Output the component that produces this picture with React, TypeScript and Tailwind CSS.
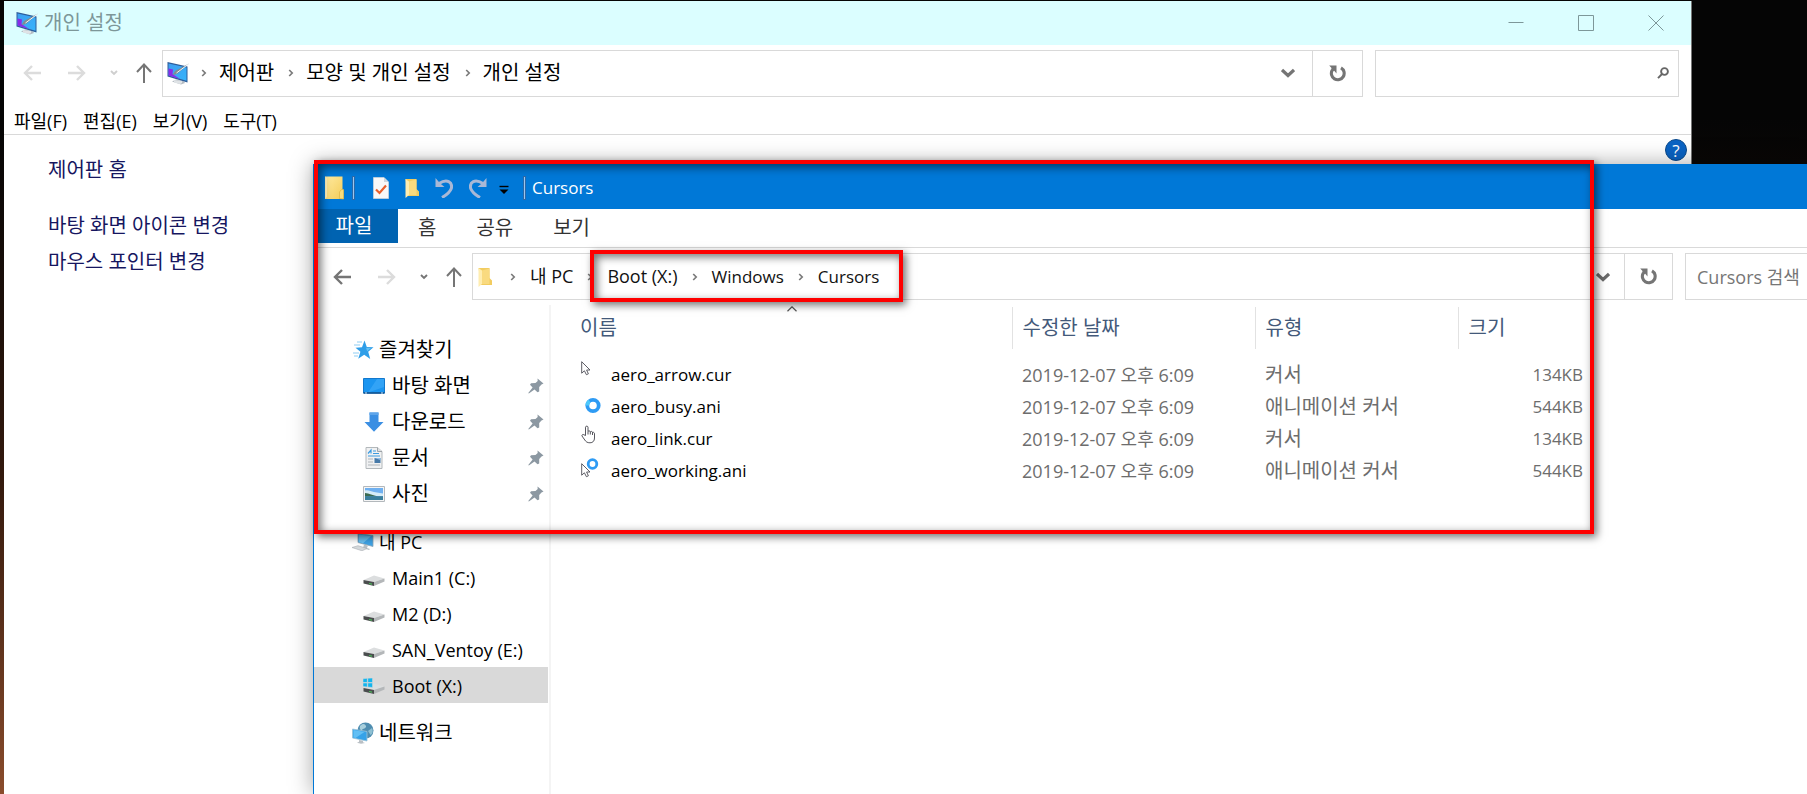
import React from "react";

type IconProps = { className?: string };

function DisplayIcon({ className = "" }: IconProps) {
  return (
    <svg viewBox="0 0 22 24" className={`h-6 w-[22px] shrink-0 ${className}`} aria-hidden="true">
      <defs>
        <linearGradient id="dispA" x1="0" y1="0" x2="1" y2="1">
          <stop offset="0" stopColor="#3f9df0" />
          <stop offset="1" stopColor="#35b4fb" />
        </linearGradient>
      </defs>
      <path d="M5 20.5l9 3 4-1.5-1-1.5-8-2z" fill="#b4bbc2" />
      <path d="M7 19v2.500l6 1.500 2-1v-2z" fill="#dfe3e6" />
      <path d="M0.500 1L20.500 5.500V21.500L0.500 15.500z" fill="#2d5c99" />
      <path d="M1.500 2.500L19.500 6.500V19.800L1.500 14.500z" fill="url(#dispA)" />
      <path d="M1.500 7.500L6 8.500 5.500 13 13 18 1.500 14.500z" fill="#8a2be8" />
      <path d="M22 2.500L10 13 5.500 14 8 10z" fill="#7f8b92" />
      <path d="M21.500 3L9.500 12" stroke="#eef2f4" strokeWidth="1" />
    </svg>
  );
}

function ArrowLeft({ className = "" }: IconProps) {
  return (
    <svg viewBox="0 0 18 18" className={`h-[18px] w-[18px] shrink-0 ${className}`} fill="none" stroke="currentColor" strokeWidth="2.4" aria-hidden="true">
      <path d="M18 9H2M9 2L2 9l7 7" />
    </svg>
  );
}

function ArrowRight({ className = "" }: IconProps) {
  return (
    <svg viewBox="0 0 18 18" className={`h-[18px] w-[18px] shrink-0 ${className}`} fill="none" stroke="currentColor" strokeWidth="2.4" aria-hidden="true">
      <path d="M0 9h16M9 2l7 7-7 7" />
    </svg>
  );
}

function ArrowUp({ className = "" }: IconProps) {
  return (
    <svg viewBox="0 0 16 20" className={`h-5 w-4 shrink-0 ${className}`} fill="none" stroke="currentColor" strokeWidth="2" aria-hidden="true">
      <path d="M8 20V2M1 9l7-7.500L15 9" />
    </svg>
  );
}

function SmallDown({ className = "" }: IconProps) {
  return (
    <svg viewBox="0 0 8 6" className={`h-1.5 w-2 shrink-0 ${className}`} fill="none" stroke="currentColor" strokeWidth="1.9" aria-hidden="true">
      <path d="M1 1l3 3 3-3" />
    </svg>
  );
}

function BigDown({ className = "" }: IconProps) {
  return (
    <svg viewBox="0 0 14 10" className={`h-2.5 w-3.5 shrink-0 ${className}`} fill="none" stroke="currentColor" strokeWidth="3.2" aria-hidden="true">
      <path d="M1 2l6 5.500L13 2" />
    </svg>
  );
}

function Crumb({ className = "" }: IconProps) {
  return (
    <svg viewBox="0 0 6 8" className={`h-2 w-1.5 shrink-0 text-[#7a7a7a] ${className}`} fill="none" stroke="currentColor" strokeWidth="1.7" aria-hidden="true">
      <path d="M1.200 1l3 3-3 3" />
    </svg>
  );
}

function Refresh() {
  return (
    <svg viewBox="0 0 17 17" className="h-[17px] w-[17px] text-[#757575]" fill="none" aria-hidden="true">
      <path d="M12 2.800A6.400 6.400 0 1 1 3.300 5" stroke="currentColor" strokeWidth="3.100" />
      <path d="M0.200 0.500H7.500V8.500L5.200 5.800 1.500 7.200 2.500 3z" fill="currentColor" />
    </svg>
  );
}

function Magnifier() {
  return (
    <svg viewBox="0 0 12 12" className="h-3 w-3 text-[#666]" fill="none" stroke="currentColor" strokeWidth="1.900" aria-hidden="true">
      <circle cx="7.500" cy="4.500" r="3.400" />
      <path d="M5 7L1 11.200" />
    </svg>
  );
}

function Folder({ className = "h-6 w-5" }: IconProps) {
  return (
    <svg viewBox="0 0 20 24" className={`shrink-0 ${className}`} preserveAspectRatio="none" aria-hidden="true">
      <defs>
        <linearGradient id="foldA" x1="0" y1="0" x2="1" y2="1">
          <stop offset="0" stopColor="#ffeaa0" />
          <stop offset="1" stopColor="#f3cc58" />
        </linearGradient>
      </defs>
      <path d="M1 0.500H18.500V14H19.500V23H1z" fill="url(#foldA)" />
      <path d="M15.500 22.500V16l2-2.500H19.500V23z" fill="#f8dc7c" stroke="#dcb445" strokeWidth="0.7" />
      <path d="M1 0.500V23L3 21V2z" fill="#fff0b8" />
    </svg>
  );
}

function FolderOpen({ className = "" }: IconProps) {
  return (
    <svg viewBox="0 0 14 20" className={`h-5 w-3.5 shrink-0 ${className}`} aria-hidden="true">
      <path d="M0.500 1H11.500V11L14 13.500V18H3z" fill="#f2cc60" />
      <path d="M0.500 1L4 3.500V17L0.500 20z" fill="#ffedb0" />
      <path d="M4 3.500L4 17 11.500 17V1.500z" fill="#f9da7f" />
    </svg>
  );
}

function CheckDoc() {
  return (
    <svg viewBox="0 0 16 22" className="h-[22px] w-4" aria-hidden="true">
      <path d="M0.500 0.500H11L15.500 5V21.500H0.500z" fill="#f8f8f8" stroke="#c9d3dd" strokeWidth="0.8" />
      <path d="M11 0.500V5h4.500" fill="#cfd6dc" />
      <path d="M3 12.500l3.500 3.500L13 8.500" fill="none" stroke="#e8602c" strokeWidth="2.200" />
    </svg>
  );
}

function Undo({ className = "" }: IconProps) {
  return (
    <svg viewBox="0 0 18 20" className={`h-5 w-[18px] ${className}`} fill="none" aria-hidden="true">
      <path d="M4 5.500C12 0.500 17.800 4 16.300 10.500 15 14 11.500 17 7 19.500" stroke="#a9b8d6" strokeWidth="3" />
      <path d="M0.500 0V9H9.500L6.500 6.500 3.500 3.500z" fill="#a9b8d6" />
    </svg>
  );
}

function StarIcon() {
  return (
    <svg viewBox="0 0 22 20" className="h-5 w-[22px]" aria-hidden="true">
      <path d="M12.500 0.500l2.300 6.500 6.700 0.300-5.300 4.400 2 7.300-6-4.200-6 4 2.200-7L3.500 7.800l6.500-0.500z" fill="#2f9ee8" />
      <path d="M12.500 2.500l1.600 5.200 5 0.400-4 3.200z" fill="#64c2f6" />
      <path d="M5 2h5M2 5h6M1 13h6M2 16h4" stroke="#8fcdf3" strokeWidth="1" />
    </svg>
  );
}

function DesktopIcon() {
  return (
    <svg viewBox="0 0 22 16" className="h-4 w-[22px]" aria-hidden="true">
      <path d="M0.500 0.500h21v14.500h-21z" fill="#1b95f0" stroke="#1278cd" />
      <path d="M14 1h7v8L5 14.500z" fill="#43aefa" opacity="0.6" />
      <path d="M0.500 15h21" stroke="#12508c" strokeWidth="1.500" />
      <path d="M2 15h2M18 15h2" stroke="#cfe8fa" strokeWidth="1" />
    </svg>
  );
}

function DownloadIcon() {
  return (
    <svg viewBox="0 0 20 20" className="h-5 w-5" aria-hidden="true">
      <path d="M5.500 0.500h9V10h5L10 19.800 0.500 10h5z" fill="#3b8fe3" />
      <path d="M5.500 0.500h9V3h-9z" fill="#5ea5ea" />
    </svg>
  );
}

function DocumentIcon() {
  return (
    <svg viewBox="0 0 18 22" className="h-[22px] w-[18px]" aria-hidden="true">
      <path d="M1 0.500h11.500l4.500 4V21.500H1z" fill="#f0f1f2" stroke="#b3b8bb" />
      <path d="M12.500 0.500v4H17" fill="#dde1e4" stroke="#8e9499" strokeWidth="0.8" />
      <path d="M3 6.500L6 3v3.500M8 4h3M8 6.500h6M3 9h12" stroke="#3a9be0" strokeWidth="1.200" fill="none" />
      <path d="M3 12h5M3 15h5M3 18h12" stroke="#b0b6ba" strokeWidth="1.100" />
      <path d="M9.500 11h6v5h-6z" fill="#4679a8" />
      <path d="M9.500 11h6v2z" fill="#8fc0ea" />
    </svg>
  );
}

function PictureIcon() {
  return (
    <svg viewBox="0 0 22 16" className="h-4 w-[22px]" aria-hidden="true">
      <path d="M0.500 0.500h21v15h-21z" fill="#f5f5f5" stroke="#b3b8bc" />
      <path d="M2 2h18v12H2z" fill="#6fb0f0" />
      <path d="M2 4.500c3-1 6 1 9 1.500s6 1 9 1.500v2.500H2z" fill="#d5ecf8" />
      <path d="M2 7c4 0 8 2.500 13 3.500H2z" fill="#3b6b50" />
      <path d="M2 10.200h18V14H2z" fill="#3a7f9c" />
    </svg>
  );
}

function ComputerIcon() {
  return (
    <svg viewBox="0 0 24 18" className="h-[18px] w-6" aria-hidden="true">
      <path d="M7 0.500L22 2.500V13.500L7 9.500z" fill="#3ea3e6" stroke="#8ba5b5" strokeWidth="0.8" />
      <path d="M8 1.500l12 1.700-8 7L8 9z" fill="#6cc2f3" />
      <path d="M13 11.500l4 1-1 2.500 3 1-1 1-6-2z" fill="#b8c0c6" />
      <path d="M1 14.500l6-1.800 9 2.800-5 2.300z" fill="#d4d8db" stroke="#a7adb2" strokeWidth="0.6" />
    </svg>
  );
}

function DriveIcon({ windows = false }: { windows?: boolean }) {
  return (
    <svg viewBox="0 0 22 16" className="h-4 w-[22px]" aria-hidden="true">
      <g transform="translate(0 1)">
        <path d="M0.500 9L11 4.500 21.500 7.500 11 11z" fill="#dcdedf" />
        <path d="M11 11L21.500 7.500V10.500L11 15z" fill="#b4b7b9" />
        <path d="M0.500 9L11 11V15L0.500 12.500z" fill="#4a4d4e" />
        <path d="M6 12.500l3 0.600" stroke="#4dbb5b" strokeWidth="1.100" />
      </g>
      {windows && (
        <path
          d="M0 0.800L4.300 0.300V4.500H0zM4.800 0.200L9.500 0V4.500H4.800zM0 5H4.300V9L0 8.500zM4.800 5H9.500V9.500L4.800 9z"
          fill="#12b5ee"
          stroke="#d9d9d9"
          strokeWidth="0.500"
        />
      )}
    </svg>
  );
}

function NetworkIcon() {
  return (
    <svg viewBox="0 0 22 22" className="h-[22px] w-[22px]" aria-hidden="true">
      <circle cx="13.500" cy="8.500" r="8" fill="#4f8db0" />
      <path d="M8 4c3-3 5-2 6 0s-4 3-4 4-3 0-2-4z" fill="#a9d0dd" />
      <path d="M16 9l4-3c1.500 3 0.500 6-1.500 7z" fill="#8fc0d2" />
      <path d="M0.500 7L15 9.500V19L0.500 16z" fill="#35a2e8" stroke="#9cc3d8" strokeWidth="0.8" />
      <path d="M1.500 8l11 2-9 6-2-.5z" fill="#62bff4" />
      <path d="M7 18l4 0.800v1.500l2 0.700-4 0.800-4-1 2-1z" fill="#b9c0c5" />
    </svg>
  );
}

function Pin() {
  return (
    <svg viewBox="0 0 16 16" className="h-4 w-4" aria-hidden="true">
      <path d="M9.500 0.500L15.500 5.500 13.500 6.500 11.200 9 11.200 13.500 9.500 14.200 6.500 11.500 0.800 15.600 0.300 15 4.600 9.500 2 6.800 3 5.300 7.500 5 9.700 3z" fill="#8c98a2" />
    </svg>
  );
}

function Pointer() {
  return (
    <path d="M0.700 0.700V12.200L3.400 9.800 5.400 13.700 7.400 12.800 5.600 9H9z" fill="#fff" stroke="#4c4c55" strokeWidth="0.9" />
  );
}

function ArrowCursor() {
  return (
    <svg viewBox="0 0 24 28" className="h-7 w-6" aria-hidden="true">
      <Pointer />
    </svg>
  );
}

function BusyCursor() {
  return (
    <svg viewBox="0 0 24 28" className="h-7 w-6" aria-hidden="true">
      <circle cx="12" cy="12.500" r="5.700" fill="none" stroke="#2e9bf4" strokeWidth="3.800" />
      <path d="M6.300 12.500A5.700 5.700 0 0 1 8.500 8" fill="none" stroke="#4cc8fb" strokeWidth="3.800" />
    </svg>
  );
}

function HandCursor() {
  return (
    <svg viewBox="0 0 24 28" className="h-7 w-6" aria-hidden="true">
      <path
        d="M4.500 10.500V2.200C4.500 0.800 7 0.800 7 2.200V6.500C7.500 5.500 9.300 5.800 9.300 6.900 10 6 11.500 6.400 11.500 7.500 12.300 7 13.500 7.500 13.500 8.700V13C13.500 16 11.800 17.800 9 17.800S5 16.800 3.800 15L1 11C0.500 9.800 2 9 3 9.800z"
        fill="#fff"
        stroke="#44444c"
        strokeWidth="0.9"
      />
      <path d="M7 6.500V9.500M9.300 7v2.500M11.500 7.500v2.500" stroke="#44444c" strokeWidth="0.9" />
    </svg>
  );
}

function WorkingCursor() {
  return (
    <svg viewBox="0 0 24 28" className="h-7 w-6" aria-hidden="true">
      <g transform="translate(0 6)">
        <Pointer />
      </g>
      <circle cx="11.500" cy="7" r="4.300" fill="none" stroke="#2e9bf4" strokeWidth="2.800" />
    </svg>
  );
}

function Divider() {
  return <span className="h-6 w-[3px] border border-[#2b69a8] bg-[#9cc6ee]" />;
}

function Navigation({ canGoBack = false }: { canGoBack?: boolean }) {
  return (
    <nav aria-label="탐색" className="flex w-[158px] items-center pl-[19px]">
      <button aria-label="뒤로" className={canGoBack ? "text-[#757575]" : "text-[#dcdcdc]"}><ArrowLeft /></button>
      <button aria-label="앞으로" className="ml-[27px] text-[#dcdcdc]"><ArrowRight /></button>
      <button aria-label="최근 위치" className={canGoBack ? "ml-6 text-[#757575]" : "ml-6 text-[#cfcfcf]"}><SmallDown /></button>
      <button aria-label="위로" className="ml-[18px] text-[#757575]"><ArrowUp /></button>
    </nav>
  );
}

type NavItemProps = {
  icon: React.ReactNode;
  label: string;
  latin?: boolean;
  pinned?: boolean;
  selected?: boolean;
};

function NavItem({ icon, label, latin, pinned, selected }: NavItemProps) {
  return (
    <li>
      <a
        href="#"
        aria-current={selected ? "page" : undefined}
        className={`mr-px flex h-9 items-center gap-1.5 pt-0.5 pr-1 pl-12 text-black ${latin ? "text-[18px]" : "text-[20px]"} ${selected ? "bg-[#d9d9d9]" : ""}`}
      >
        <span className="flex w-6 justify-center">{icon}</span>
        <span className="flex-1">{label}</span>
        {pinned && <Pin />}
      </a>
    </li>
  );
}

function NavGroup({ icon, label, latin }: { icon: React.ReactNode; label: string; latin?: boolean }) {
  return (
    <a href="#" className={`flex h-9 items-center gap-1 pt-0.5 pl-[37px] text-black ${latin ? "text-[18px]" : "text-[20px]"}`}>
      <span className="flex w-6 justify-center">{icon}</span>
      {label}
    </a>
  );
}

const files = [
  { name: "aero_arrow.cur", type: "커서", size: "134KB", icon: <ArrowCursor /> },
  { name: "aero_busy.ani", type: "애니메이션 커서", size: "544KB", icon: <BusyCursor /> },
  { name: "aero_link.cur", type: "커서", size: "134KB", icon: <HandCursor /> },
  { name: "aero_working.ani", type: "애니메이션 커서", size: "544KB", icon: <WorkingCursor /> },
];

function ControlPanelWindow() {
  return (
    <section aria-label="개인 설정" className="mt-px mr-[115px] ml-1 flex min-h-[793px] flex-col border-r border-[#777] bg-white">
      <header className="flex h-11 items-center bg-[#dbfeff] pl-3 text-[#7d9799]">
        <DisplayIcon />
        <h1 className="ml-1.5 flex-1 text-[20px]">개인 설정</h1>
        <button aria-label="최소화" className="flex h-11 w-[70px] items-center justify-center">
          <svg viewBox="0 0 16 16" className="h-4 w-4" stroke="currentColor"><path d="M0.500 7.500h15" /></svg>
        </button>
        <button aria-label="최대화" className="flex h-11 w-[70px] items-center justify-center">
          <svg viewBox="0 0 16 16" className="h-4 w-4" fill="none" stroke="currentColor"><path d="M0.500 0.500h15v15h-15z" /></svg>
        </button>
        <button aria-label="닫기" className="flex h-11 w-[70px] items-center justify-center">
          <svg viewBox="0 0 16 16" className="h-4 w-4" stroke="currentColor"><path d="M0.500 0.500l15 15M15.500 0.500l-15 15" /></svg>
        </button>
      </header>

      <div className="flex h-14 items-center pr-3">
        <Navigation />
        <div className="flex h-[47px] flex-1 border border-[#d9d9d9] text-[20px] text-black">
          <div className="flex flex-1 items-center pl-1">
            <DisplayIcon />
            <Crumb className="ml-3" />
            <a href="#" className="ml-3">제어판</a>
            <Crumb className="ml-3.5" />
            <a href="#" className="ml-3">모양 및 개인 설정</a>
            <Crumb className="ml-3.5" />
            <a href="#" className="ml-3">개인 설정</a>
          </div>
          <button aria-label="이전 위치" className="w-12 pl-[17px] text-[#757575]"><BigDown /></button>
          <button aria-label="새로 고침" className="flex w-[50px] items-center justify-center border-l border-[#d9d9d9]"><Refresh /></button>
        </div>
        <label className="ml-3 flex h-[47px] w-[304px] items-center border border-[#d9d9d9] pr-[9px]">
          <input aria-label="검색" className="min-w-0 flex-1 bg-transparent px-2 text-[20px] outline-none" />
          <Magnifier />
        </label>
      </div>

      <nav aria-label="메뉴" className="flex h-[34px] items-center gap-4 border-b border-[#d9d9d9] pt-2 pl-2.5 text-[18px] text-black">
        <button>파일(F)</button>
        <button>편집(E)</button>
        <button>보기(V)</button>
        <button>도구(T)</button>
      </nav>

      <div className="flex flex-1 justify-between pl-11">
        <nav aria-label="작업" className="flex flex-col pt-[21px] text-[20px] leading-7 text-[#16165f]">
          <a href="#">제어판 홈</a>
          <a href="#" className="mt-7">바탕 화면 아이콘 변경</a>
          <a href="#" className="mt-2">마우스 포인터 변경</a>
        </nav>
        <button aria-label="도움말" className="mt-1 mr-1 flex h-[22px] w-[22px] items-center justify-center rounded-full border border-[#0b4a8c] bg-[#0a63c4] text-[17px] leading-none text-white">
          ?
        </button>
      </div>
    </section>
  );
}

function ExplorerWindow() {
  return (
    <section
      aria-label="Cursors"
      className="absolute top-[164px] right-0 bottom-0 left-[313px] flex flex-col border-l border-[#0078d7] bg-white shadow-[0_0_22px_rgba(0,0,0,0.35)]"
    >
      <header className="flex h-[45px] items-center bg-[#0078d7] pt-0.5 pl-2.5 text-white">
        <Folder className="h-6 w-5" />
        <span className="ml-2 flex"><Divider /></span>
        <button aria-label="속성" className="ml-[18px]"><CheckDoc /></button>
        <button aria-label="새 폴더" className="ml-4"><FolderOpen /></button>
        <button aria-label="실행 취소" className="ml-4"><Undo /></button>
        <button aria-label="다시 실행" className="ml-4"><Undo className="-scale-x-100" /></button>
        <button aria-label="빠른 실행 도구 모음 사용자 지정" className="ml-3">
          <svg viewBox="0 0 10 10" className="mt-1 h-2.5 w-2.5"><path d="M0.500 1.500h9" stroke="#000" strokeWidth="1.400" /><path d="M0.500 4.500h9L5 9z" fill="#000" /></svg>
        </button>
        <span className="ml-3.5 flex"><Divider /></span>
        <h2 className="ml-1.5 text-[17px]">Cursors</h2>
      </header>

      <nav aria-label="리본" className="flex h-[39px] border-b border-[#d9d9d9] text-[20px] text-[#333]">
        <button className="h-[34px] w-[84px] bg-[#0063b1] pr-1 text-white">파일</button>
        <button className="ml-5">홈</button>
        <button className="ml-10">공유</button>
        <button className="ml-10">보기</button>
      </nav>

      <div className="flex h-[57px] items-center">
        <Navigation canGoBack />
        <div className="flex h-[47px] flex-1 border border-[#d9d9d9] text-[17px] text-[#111]">
          <div className="flex flex-1 items-center pl-[5px]">
            <FolderOpen />
            <Crumb className="ml-[18px]" />
            <a href="#" className="ml-3.5 text-[18px]">내 PC</a>
            <Crumb className="ml-3.5" />
            <a href="#" className="ml-3.5 text-[18px]">Boot (X:)</a>
            <Crumb className="ml-3.5" />
            <a href="#" className="ml-3.5">Windows</a>
            <Crumb className="ml-3.5" />
            <a href="#" className="ml-3.5">Cursors</a>
          </div>
          <button aria-label="이전 위치" className="w-[30px] pl-0.5 text-[#6a6a6a]"><BigDown /></button>
          <button aria-label="새로 고침" className="flex w-12 items-center justify-center border-l border-[#d9d9d9]"><Refresh /></button>
        </div>
        <input
          aria-label="Cursors 검색"
          placeholder="Cursors 검색"
          className="ml-3 h-[47px] w-[122px] border border-r-0 border-[#d9d9d9] pl-[11px] text-[18px] outline-none placeholder:text-[#767676]"
        />
      </div>

      <div className="flex flex-1">
        <aside className="w-[237px] border-r-2 border-[#f4f4f4] pt-[26px]">
          <NavGroup icon={<StarIcon />} label="즐겨찾기" />
          <ul className="mb-3">
            <NavItem icon={<DesktopIcon />} label="바탕 화면" pinned />
            <NavItem icon={<DownloadIcon />} label="다운로드" pinned />
            <NavItem icon={<DocumentIcon />} label="문서" pinned />
            <NavItem icon={<PictureIcon />} label="사진" pinned />
          </ul>
          <NavGroup icon={<ComputerIcon />} label="내 PC" latin />
          <ul className="mb-[11px]">
            <NavItem icon={<DriveIcon />} label="Main1 (C:)" latin />
            <NavItem icon={<DriveIcon />} label="M2 (D:)" latin />
            <NavItem icon={<DriveIcon />} label="SAN_Ventoy (E:)" latin />
            <NavItem icon={<DriveIcon windows />} label="Boot (X:)" latin selected />
          </ul>
          <NavGroup icon={<NetworkIcon />} label="네트워크" />
        </aside>

        <div className="relative flex-1 pt-0.5">
          <svg viewBox="0 0 10 6" className="absolute top-px left-[236px] h-1.5 w-2.5" fill="none" stroke="#555" strokeWidth="1.200" aria-hidden="true">
            <path d="M0.500 5.200L5 0.800l4.500 4.400" />
          </svg>
          <table className="table-fixed border-collapse text-left">
            <colgroup>
              <col className="w-[461px]" />
              <col className="w-[243px]" />
              <col className="w-[203px]" />
              <col className="w-[133px]" />
            </colgroup>
            <thead className="text-[20px] text-[#43597a]">
              <tr className="h-[42px]">
                <th className="border-r border-[#e2e2e2] p-0 pl-[29px] font-normal">이름</th>
                <th className="border-r border-[#e2e2e2] p-0 pl-2.5 font-normal">수정한 날짜</th>
                <th className="border-r border-[#e2e2e2] p-0 pl-2.5 font-normal">유형</th>
                <th className="p-0 pl-2.5 font-normal">크기</th>
              </tr>
              <tr className="h-2.5" aria-hidden="true" />
            </thead>
            <tbody className="text-[17px] text-[#6d6d6d]">
              {files.map((f) => (
                <tr key={f.name} className="h-8">
                  <td className="p-0 pl-[30px] text-black">
                    <span className="flex h-8 items-center gap-1.5">
                      {f.icon}
                      {f.name}
                    </span>
                  </td>
                  <td className="p-0 pl-2.5 text-[18px]">2019-12-07 오후 6:09</td>
                  <td className="p-0 pl-2.5 text-[20px] leading-7">{f.type}</td>
                  <td className="p-0 pr-2 text-right">{f.size}</td>
                </tr>
              ))}
            </tbody>
          </table>
        </div>
      </div>
    </section>
  );
}

export default function App() {
  return (
    <main
      lang="ko"
      className="relative min-h-screen overflow-hidden bg-linear-to-b from-[#050505] from-15% via-[#33190d] via-60% to-[#8a4c2c] font-['Open_Sans','Noto_Sans_CJK_KR',sans-serif] font-normal"
    >
      <ControlPanelWindow />
      <ExplorerWindow />
      <div className="pointer-events-none absolute top-[160px] left-[314px] h-[374px] w-[1280px] border-4 border-[#fe0000] shadow-[3px_3px_8px_rgba(0,0,0,0.55),inset_3px_3px_10px_rgba(0,0,0,0.55)]" />
      <div className="pointer-events-none absolute top-[250px] left-[590px] h-[52px] w-[313px] border-4 border-[#fe0000] shadow-[3px_3px_8px_rgba(0,0,0,0.55),inset_3px_3px_8px_rgba(0,0,0,0.55)]" />
    </main>
  );
}
